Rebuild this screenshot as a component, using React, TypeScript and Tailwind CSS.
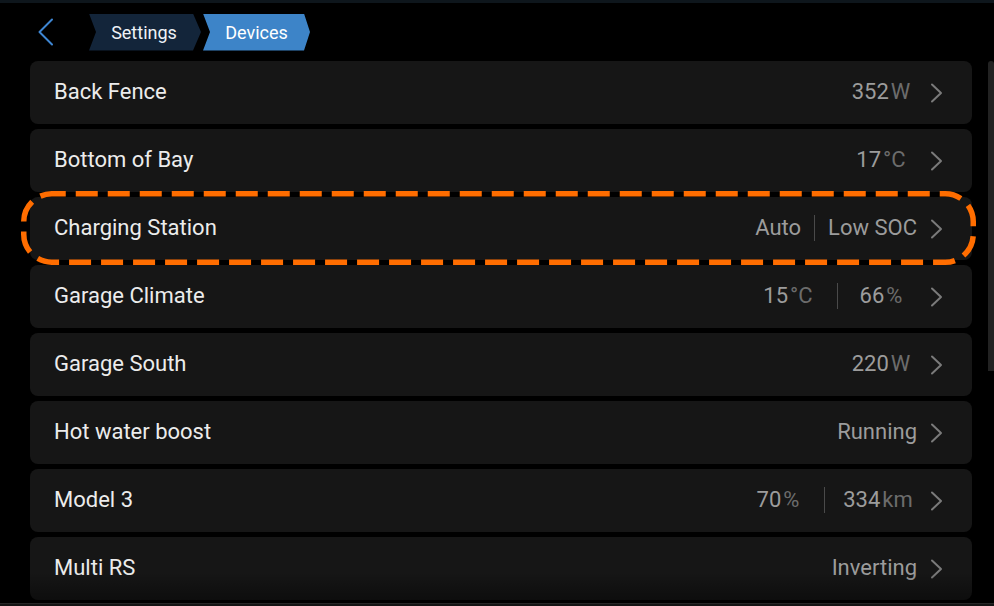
import React from "react";

const Chevron = () => (
  <svg width="14" height="20" viewBox="0 0 14 20" className="shrink-0">
    <polyline points="2,1.5 11,10 2,18.5" fill="none" stroke="#7a7a7a" strokeWidth="2" strokeLinecap="round" strokeLinejoin="round" />
  </svg>
);

const Q = ({ n, u, cls = "" }: { n: string; u: string; cls?: string }) => (
  <div className={`w-[72px] flex justify-center whitespace-nowrap ${cls}`}>
    <span className="text-[#9c9c9c]">{n}</span>
    <span className="ml-[2px] text-[#6c6c6c]">{u}</span>
  </div>
);

const Sep = ({ cls = "" }: { cls?: string }) => <div className={`h-[26px] w-px bg-[#4a4a4a] ${cls}`} />;

const T = ({ t }: { t: string }) => <span className="text-[#9c9c9c] whitespace-nowrap">{t}</span>;

const rows: { label: string; right: React.ReactNode }[] = [
  { label: "Back Fence", right: <Q n="352" u="W" /> },
  { label: "Bottom of Bay", right: <Q n="17" u="°C" /> },
  {
    label: "Charging Station",
    right: (
      <>
        <T t="Auto" />
        <Sep cls="mx-[13px]" />
        <T t="Low SOC" />
      </>
    ),
  },
  {
    label: "Garage Climate",
    right: (
      <>
        <Q n="15" u="°C" />
        <Sep cls="ml-[13px] mr-[7px]" />
        <Q n="66" u="%" />
      </>
    ),
  },
  { label: "Garage South", right: <Q n="220" u="W" /> },
  { label: "Hot water boost", right: <T t="Running" /> },
  {
    label: "Model 3",
    right: (
      <>
        <Q n="70" u="%" />
        <Sep cls="ml-[10px] mr-[17px]" />
        <Q n="334" u="km" cls="mr-[3px]" />
      </>
    ),
  },
  { label: "Multi RS", right: <T t="Inverting" /> },
];

export default function App() {
  return (
    <div
      className="relative w-[994px] h-[606px] overflow-hidden bg-black flex flex-col"
      style={{ fontFamily: "Roboto, 'Noto Sans', sans-serif" }}
    >
      <div className="h-[3px] bg-[#0e161c] shrink-0" />
      <div className="h-[58px] shrink-0 flex items-center pl-[38px]">
        <svg width="16" height="28" viewBox="0 0 16 28" className="shrink-0">
          <polyline points="14,1.5 1.5,14 14,26.5" fill="none" stroke="#3e86d3" strokeWidth="2" strokeLinejoin="round" strokeLinecap="round" />
        </svg>
        <div className="ml-[35px] flex items-center">
          <div className="w-[112px] h-[37px] bg-[#13253a] flex items-center justify-center pl-[2px] pr-[4px] text-[18px] text-[#eef2f6] [clip-path:polygon(0_0,104px_0,112px_50%,104px_100%,0_100%,7px_50%)]">
            Settings
          </div>
          <div className="ml-[2px] w-[107px] h-[37px] bg-[#3d84c8] flex items-center justify-center pl-[2px] pr-[2px] text-[18px] text-white [clip-path:polygon(0_0,101px_0,107px_50%,101px_100%,0_100%,7px_50%)]">
            Devices
          </div>
        </div>
      </div>
      <div className="flex flex-1 min-h-0">
        <div className="ml-[30px] w-[942px] flex flex-col gap-[5px]">
          {rows.map((r) => (
            <div
              key={r.label}
              className="h-[63px] shrink-0 rounded-lg bg-[#161616] flex items-center pl-[24px] pr-[28px] text-[22px] leading-none"
            >
              <span className="text-[#ececec] flex-1 -mt-[2px]">{r.label}</span>
              <div className="flex items-center -mt-[2px]">{r.right}</div>
              <div className="ml-[13px]">
                <Chevron />
              </div>
            </div>
          ))}
        </div>
        <div className="ml-[16px] w-[6px] h-[310px] rounded-t-sm bg-[#222222]" />
      </div>
      <div className="h-[6px] shrink-0 bg-black" />
      <div className="absolute left-0 right-0 top-[572px] h-[28px] bg-gradient-to-b from-transparent to-black/40 pointer-events-none" />
      <div className="absolute left-0 right-0 bottom-0 h-[3px] bg-[#141414] border-t border-[#262626]" />
      <svg
        className="absolute left-[21px] top-[191px] pointer-events-none"
        width="955"
        height="74"
        viewBox="0 0 955 74"
      >
        <rect
          x="2.75"
          y="2.75"
          width="949.5"
          height="68.5"
          rx="28"
          fill="none"
          stroke="#ff6d00"
          strokeWidth="5.5"
          strokeDasharray="22 10"
          strokeDashoffset="8"
        />
      </svg>
    </div>
  );
}
